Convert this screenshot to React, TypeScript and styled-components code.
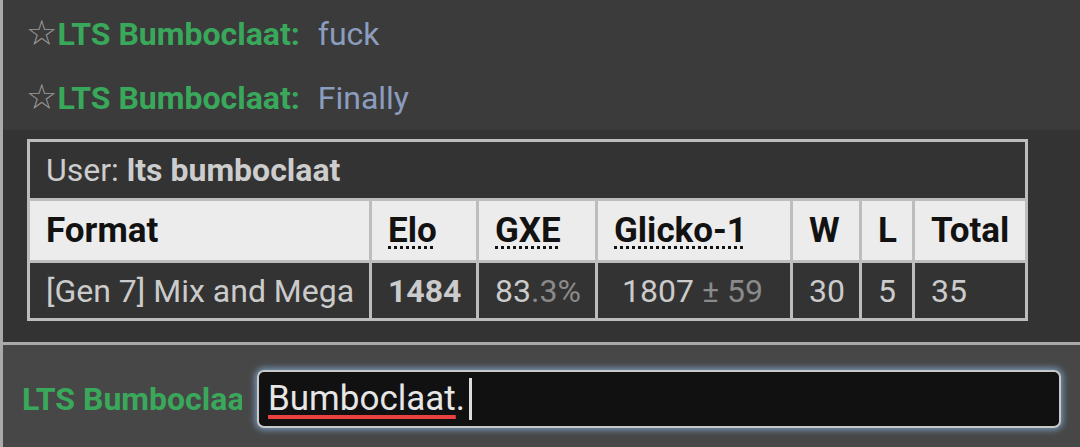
import React, { FC } from 'react'
import styled, { createGlobalStyle } from 'styled-components'

const GlobalStyle = createGlobalStyle`
  body {
    margin: 0;
    background: #3b3b3b;
    font-family: Roboto, "Noto Sans", "DejaVu Sans", sans-serif;
  }
`

const messages = [
  { name: 'LTS Bumboclaat:', text: 'fuck' },
  { name: 'LTS Bumboclaat:', text: 'Finally' },
]

const App: FC = () => {
  return (
    <>
      <GlobalStyle />
      <Room>
        <ChatLog>
          {messages.map((m, i) => (
            <ChatLine key={i}>
              <Star>☆</Star>
              <UserName>{m.name}</UserName>
              <MessageText>{m.text}</MessageText>
            </ChatLine>
          ))}
        </ChatLog>

        <RankBlock>
          <RankTable>
            <colgroup>
              <col style={{ width: 342 }} />
              <col style={{ width: 107 }} />
              <col style={{ width: 119 }} />
              <col style={{ width: 195 }} />
              <col style={{ width: 69 }} />
              <col style={{ width: 53 }} />
              <col style={{ width: 113 }} />
            </colgroup>
            <tbody>
              <tr>
                <CaptionCell colSpan={7}>
                  User: <strong>lts bumboclaat</strong>
                </CaptionCell>
              </tr>
              <tr>
                <HeadCell>Format</HeadCell>
                <HeadCell><Abbr>Elo</Abbr></HeadCell>
                <HeadCell><Abbr>GXE</Abbr></HeadCell>
                <HeadCell><Abbr>Glicko-1</Abbr></HeadCell>
                <HeadCell>W</HeadCell>
                <HeadCell>L</HeadCell>
                <HeadCell>Total</HeadCell>
              </tr>
              <tr>
                <DataCell>[Gen 7] Mix and Mega</DataCell>
                <DataCell><strong>1484</strong></DataCell>
                <DataCell>83<Dim>.3%</Dim></DataCell>
                <DataCell $indent={24}>1807<Dim> ± 59</Dim></DataCell>
                <DataCell>30</DataCell>
                <DataCell>5</DataCell>
                <DataCell>35</DataCell>
              </tr>
            </tbody>
          </RankTable>
        </RankBlock>

        <ChatBar>
          <BarName>LTS Bumboclaat</BarName>
          <TextBox>
            <Misspelled>Bumboclaat</Misspelled>.
            <Caret />
          </TextBox>
        </ChatBar>
      </Room>
    </>
  )
}

const Room = styled.div`
  display: flex;
  flex-direction: column;
  height: 447px;
  border-left: 3px solid #aaaaaa;
  overflow: hidden;
`

const ChatLog = styled.div`
  background: #3b3b3b;
  padding: 1px 0 0 23px;
  height: 129px;
`

const ChatLine = styled.div`
  display: flex;
  align-items: baseline;
  height: 64px;
  line-height: 64px;
  white-space: nowrap;
`

const Star = styled.span`
  font-family: "DejaVu Sans", sans-serif;
  font-size: 35px;
  color: #9a9a9a;
`

const UserName = styled.span`
  font-size: 32px;
  font-weight: 700;
  color: #3aa85b;
  margin-right: 18px;
`

const MessageText = styled.span`
  font-size: 32px;
  color: #8b9dbf;
`

const RankBlock = styled.div`
  background: #333333;
  padding: 9px 0 21px 24px;
`

const RankTable = styled.table`
  border-collapse: collapse;
  table-layout: fixed;
  width: 1001px;
  border: 3px solid #bdbdbd;

  td, th {
    border: 3px solid #bdbdbd;
  }
`

const CaptionCell = styled.th`
  height: 56px;
  padding: 0 16px;
  text-align: left;
  font-size: 32px;
  font-weight: 400;
  color: #cdcdcd;
  background: #333333;

  strong {
    font-weight: 700;
  }
`

const HeadCell = styled.th`
  height: 59px;
  padding: 0 0 0 16px;
  text-align: left;
  font-size: 35px;
  font-weight: 700;
  color: #121212;
  background: #ececec;
  white-space: nowrap;
`

const Abbr = styled.span`
  text-decoration: underline dotted #121212;
  text-decoration-thickness: 3px;
  text-underline-offset: 4px;
`

const DataCell = styled.td<{ $indent?: number }>`
  height: 55px;
  padding: 0 0 0 ${p => p.$indent ?? 16}px;
  font-size: 32px;
  color: #cbcbcb;
  background: #333333;
  white-space: nowrap;

  strong {
    font-weight: 700;
  }
`

const Dim = styled.span`
  color: #8a8a8a;
`

const ChatBar = styled.div`
  flex: 1;
  display: flex;
  align-items: flex-start;
  border-top: 3px solid #aaaaaa;
  background: #474747;
  padding: 25px 0 0 19px;
`

const BarName = styled.div`
  width: 220px;
  overflow: hidden;
  white-space: nowrap;
  font-size: 32px;
  font-weight: 700;
  color: #3aa85b;
  line-height: 58px;
  margin-right: 15px;
`

const TextBox = styled.div`
  box-sizing: border-box;
  width: 804px;
  height: 58px;
  padding: 0 9px;
  border: 2px solid #c9c9c9;
  border-radius: 7px;
  background: #111111;
  box-shadow: 0 0 6px 2px rgba(130, 170, 210, 0.8);
  font-size: 35px;
  line-height: 54px;
  color: #e6e6e6;
  white-space: nowrap;
  display: flex;
  align-items: center;
`

const Misspelled = styled.span`
  text-decoration: underline solid #e8413f;
  text-decoration-thickness: 4px;
  text-underline-offset: 5px;
  text-decoration-skip-ink: none;
`

const Caret = styled.span`
  display: inline-block;
  width: 3px;
  height: 42px;
  margin-left: 4px;
  background: #dddddd;
`

export default App
